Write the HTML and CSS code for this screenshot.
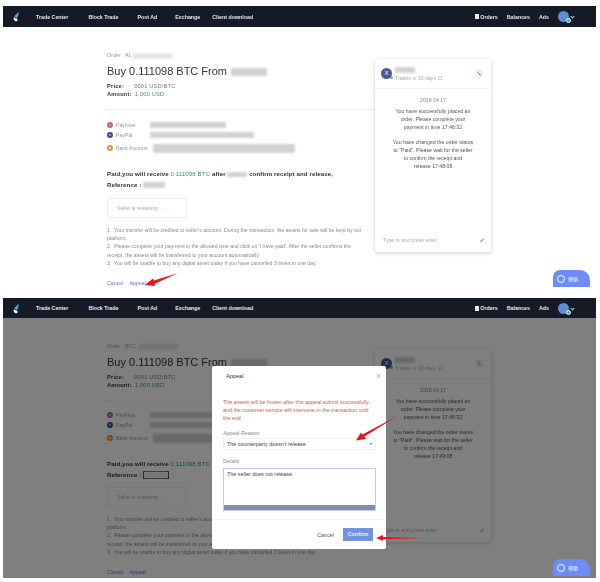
FILE: index.html
```html
<!DOCTYPE html>
<html lang="en">
<head>
    <meta charset="UTF-8">
    <meta name="viewport" content="width=device-width, initial-scale=1.0">
    <title>Appeal an order</title>
    <link rel="stylesheet" href="styles.css">
</head>
<body>
    <!-- first shot: order page -->
    <section class="shot shot-first">
        <nav class="topbar">
            <svg class="logo" viewBox="0 0 10 14"><path d="M6.500 0C7 3 3 4 1.500 7L5 9C7 6 7.500 3 6.500 0Z" fill="#5aa5e8"/><path d="M1 8C0 11 2 13.500 4.500 13C6 12.500 6 10.500 5 10Z" fill="#fff"/></svg>
            <a class="nav-link nav-trade">Trade Center</a>
            <a class="nav-link nav-block">Block Trade</a>
            <a class="nav-link nav-post">Post Ad</a>
            <a class="nav-link nav-exchange">Exchange</a>
            <a class="nav-link">Client download</a>
            <div class="nav-right">
                <span class="orders-icon"></span>
                <a class="nav-link nav-orders">Orders</a>
                <a class="nav-link nav-balances">Balances</a>
                <a class="nav-link">Ads</a>
                <span class="nav-avatar"><span class="nav-badge"></span></span>
                <span class="nav-caret"></span>
            </div>
        </nav>
        <main class="content">
            <div class="order">
                <p class="order-no">Order : #1<span class="redact redact-no"></span></p>
                <h1 class="order-title">Buy 0.111098 BTC From <span class="redact redact-name"></span></h1>
                <p class="order-meta"><b>Price:</b><span class="meta-value">9001 USD/BTC</span></p>
                <p class="order-meta"><b>Amount:</b><span class="meta-green">1,000 USD</span></p>
                <hr class="divider">
                <div class="pay-row"><span class="pay-dot dot-pink"></span><span class="pay-label">PayNow</span><span class="redact redact-pay1"></span></div>
                <div class="pay-row"><span class="pay-dot dot-navy"></span><span class="pay-label">PayPal</span><span class="redact redact-pay2"></span></div>
                <div class="pay-row pay-bank"><span class="pay-dot dot-orange"></span><span class="pay-label label-bank">Bank Account</span><span class="redact redact-pay3"></span></div>
                <p class="paid">Paid,you will receive <span class="paid-green">0.111098 BTC</span> after <span class="redact redact-seller"></span> confirm receipt and release,</p>
                <p class="paid">Reference : <span class="redact redact-ref"></span></p>
                <div class="status-box">Seller is releasing<span class="status-dots">&middot; &middot; &middot;</span></div>
                <ol class="notes">
                    <li>1.&nbsp; Your transfer will be credited to seller's account. During the transaction, the assets for sale will be kept by our platform.</li>
                    <li>2.&nbsp; Please complete your payment in the allowed time and click on 'I have paid'. After the seller confirms the receipt, the assets will be transferred to your account automatically.</li>
                    <li>3.&nbsp; You will be unable to buy any digital asset today if you have cancelled 3 times in one day.</li>
                </ol>
                <div class="order-links"><a>Cancel</a><a>Appeal</a></div>
            </div>
            <aside class="chat-card">
                <header class="chat-head">
                    <span class="chat-avatar">X<span class="chat-online"></span></span>
                    <div class="chat-who"><span class="redact redact-who"></span><span class="chat-trades">Trades in 30 days 11</span></div>
                    <svg class="chat-phone" viewBox="0 0 12 12"><circle cx="6" cy="6" r="5.500" fill="#eef0fa"/><path d="M4 3.500C4 6 6 8.300 8.500 8.300" fill="none" stroke="#6c78c4" stroke-width="1.100"/></svg>
                </header>
                <div class="chat-log">
                    <p class="chat-date">2018 04 17</p>
                    <p class="chat-msg">You have successfully placed an order. Please complete your<br>payment in time 17:46:32</p>
                    <p class="chat-msg">You have changed the order status to "Paid". Please wait for the seller<br>to confirm the receipt and<br>release 17:48:08</p>
                </div>
                <footer class="chat-foot">
                    <span>Type in and press enter</span>
                    <svg class="chat-clip" viewBox="0 0 8 8"><path d="M1 6L5.500 1.500L7 3L2.500 7.200Z" fill="#aaa"/></svg>
                </footer>
            </aside>
        </main>
        <div class="help-btn"><span class="help-ring"></span><span class="help-text">帮助</span></div>
        <svg class="marks" viewBox="0 0 593 281"><polygon points="175,267 151,274.500 150,272.500 142,279 152,280 151.500,278" fill="#e8141c"/></svg>
    </section>

    <!-- second shot: same page with appeal dialog -->
    <section class="shot shot-dim">
        <nav class="topbar">
            <svg class="logo" viewBox="0 0 10 14"><path d="M6.500 0C7 3 3 4 1.500 7L5 9C7 6 7.500 3 6.500 0Z" fill="#5aa5e8"/><path d="M1 8C0 11 2 13.500 4.500 13C6 12.500 6 10.500 5 10Z" fill="#fff"/></svg>
            <a class="nav-link nav-trade">Trade Center</a>
            <a class="nav-link nav-block">Block Trade</a>
            <a class="nav-link nav-post">Post Ad</a>
            <a class="nav-link nav-exchange">Exchange</a>
            <a class="nav-link">Client download</a>
            <div class="nav-right">
                <span class="orders-icon"></span>
                <a class="nav-link nav-orders">Orders</a>
                <a class="nav-link nav-balances">Balances</a>
                <a class="nav-link">Ads</a>
                <span class="nav-avatar"><span class="nav-badge"></span></span>
                <span class="nav-caret"></span>
            </div>
        </nav>
        <main class="content">
            <div class="order">
                <p class="order-no">Order : BTC<span class="redact redact-no"></span></p>
                <h1 class="order-title">Buy 0.111098 BTC From <span class="redact redact-name"></span></h1>
                <p class="order-meta"><b>Price:</b><span class="meta-value">9001 USD/BTC</span></p>
                <p class="order-meta"><b>Amount:</b><span class="meta-green">1,000 USD</span></p>
                <hr class="divider">
                <div class="pay-row"><span class="pay-dot dot-pink"></span><span class="pay-label">PayNow</span><span class="redact redact-pay1"></span></div>
                <div class="pay-row"><span class="pay-dot dot-navy"></span><span class="pay-label">PayPal</span><span class="redact redact-pay2"></span></div>
                <div class="pay-row pay-bank"><span class="pay-dot dot-orange"></span><span class="pay-label label-bank">Bank Account</span><span class="redact redact-pay3"></span></div>
                <p class="paid">Paid,you will receive <span class="paid-green">0.111098 BTC</span> after <span class="redact redact-seller"></span> confirm receipt and release,</p>
                <p class="paid">Reference : <span class="ref-box"><span class="redact redact-ref"></span></span></p>
                <div class="status-box">Seller is releasing<span class="status-dots">&middot; &middot; &middot;</span></div>
                <ol class="notes">
                    <li>1.&nbsp; Your transfer will be credited to seller's account. During the transaction, the assets for sale will be kept by our platform.</li>
                    <li>2.&nbsp; Please complete your payment in the allowed time and click on 'I have paid'. After the seller confirms the receipt, the assets will be transferred to your account automatically.</li>
                    <li>3.&nbsp; You will be unable to buy any digital asset today if you have cancelled 3 times in one day.</li>
                </ol>
                <div class="order-links"><a>Cancel</a><a>Appeal</a></div>
            </div>
            <aside class="chat-card">
                <header class="chat-head">
                    <span class="chat-avatar">X<span class="chat-online"></span></span>
                    <div class="chat-who"><span class="redact redact-who"></span><span class="chat-trades">Trades in 30 days 11</span></div>
                    <svg class="chat-phone" viewBox="0 0 12 12"><circle cx="6" cy="6" r="5.500" fill="#eef0fa"/><path d="M4 3.500C4 6 6 8.300 8.500 8.300" fill="none" stroke="#6c78c4" stroke-width="1.100"/></svg>
                </header>
                <div class="chat-log">
                    <p class="chat-date">2018 04 17</p>
                    <p class="chat-msg">You have successfully placed an order. Please complete your<br>payment in time 17:46:32</p>
                    <p class="chat-msg">You have changed the order status to "Paid". Please wait for the seller<br>to confirm the receipt and<br>release 17:49:08</p>
                </div>
                <footer class="chat-foot">
                    <span>Type in and press enter</span>
                    <svg class="chat-clip" viewBox="0 0 8 8"><path d="M1 6L5.500 1.500L7 3L2.500 7.200Z" fill="#aaa"/></svg>
                </footer>
            </aside>
        </main>
        <div class="backdrop"></div>
        <div class="modal">
            <div class="modal-head"><span>Appeal</span><span class="modal-close">&times;</span></div>
            <div class="modal-body">
                <p class="modal-warn">The assets will be frozen after this appeal submit successfully, and the customer service will intervene in the transaction until the end</p>
                <label class="field-label">Appeal Reason</label>
                <div class="select-box"><span>The counterparty doesn't release</span><span class="select-caret"></span></div>
                <label class="field-label field-details">Details</label>
                <div class="text-box"><span class="text-value">The seller does not release.</span><span class="text-bar"></span></div>
            </div>
            <div class="modal-foot"><a class="modal-cancel">Cancel</a><a class="modal-confirm">Confirm</a></div>
        </div>
        <div class="help-btn"><span class="help-ring"></span><span class="help-text">帮助</span></div>
        <svg class="marks" viewBox="0 0 593 280">
            <polygon points="396,117 361.500,138.500 363,141 353,142.500 358,134.500 359.500,136.500" fill="#e8141c"/>
            <polygon points="421,240 380,239 380,237 373,240 380,243 380,241.200" fill="#e8141c"/>
        </svg>
    </section>
</body>
</html>
```

FILE: styles.css
```css
* {
    box-sizing: border-box;
}

body {
    margin: 0;
    background: #fff;
    font-family: "Liberation Sans", Arial, sans-serif;
    color: #555;
}

p, h1, ol {
    margin: 0;
    padding: 0;
}

.shot {
    position: relative;
    width: 593px;
    height: 281px;
    margin: 6px 0 0 3px;
    overflow: hidden;
    filter: blur(0.4px);
}

.shot-dim {
    height: 280px;
    margin-top: 11px;
}

/* nav */
.topbar {
    position: relative;
    z-index: 3;
    display: flex;
    align-items: center;
    height: 21px;
    padding-left: 10px;
    background: #161a27;
}

.shot-dim .topbar {
    height: 20px;
}

.logo {
    width: 8px;
    height: 11px;
    margin-right: 15px;
}

.nav-link {
    font-size: 5.3px;
    font-weight: bold;
    color: #e6e8ee;
    white-space: nowrap;
}

.nav-trade { margin-right: 20px; }
.nav-block { margin-right: 19px; }
.nav-post { margin-right: 18px; }
.nav-exchange { margin-right: 12px; }

.nav-right {
    display: flex;
    align-items: center;
    margin-left: auto;
    padding-right: 22px;
}

.orders-icon {
    width: 4px;
    height: 5px;
    margin-right: 1px;
    background: #eee;
}

.nav-orders { margin-right: 9px; }
.nav-balances { margin-right: 9px; }

.nav-avatar {
    position: relative;
    width: 11px;
    height: 11px;
    margin-left: 9px;
    border-radius: 50%;
    background: #5c8fd6;
}

.nav-badge {
    position: absolute;
    right: -2px;
    bottom: -1px;
    width: 5px;
    height: 5px;
    border-radius: 50%;
    background: #3fb37a;
    border: 1px solid #dff;
}

.nav-caret {
    width: 3px;
    height: 3px;
    margin-left: 2px;
    border-right: 1px solid #ccc;
    border-bottom: 1px solid #ccc;
    transform: rotate(45deg);
}

/* order column */
.content {
    display: flex;
    align-items: flex-start;
    padding-left: 104px;
}

.order {
    width: 268px;
    padding-top: 24px;
}

.order-no {
    font-size: 5.4px;
    line-height: 8px;
    color: #999;
}

.order-title {
    margin-top: 5px;
    font-size: 11px;
    font-weight: normal;
    line-height: 14px;
    color: #333;
    white-space: nowrap;
}

.order-meta {
    font-size: 5.6px;
    line-height: 8px;
    letter-spacing: 0.25px;
    color: #333;
}

.order-title + .order-meta {
    margin-top: 4px;
}

.meta-value {
    margin-left: 10px;
    color: #777;
}

.meta-green {
    margin-left: 3px;
    color: #2f9a63;
}

.divider {
    height: 1px;
    margin: 11px 0 10px -2px;
    border: 0;
    background: #f0f0f0;
}

.pay-row {
    display: flex;
    align-items: center;
    height: 10px;
    font-size: 5.2px;
    color: #999;
}

.pay-bank {
    height: 10px;
    margin-top: 3px;
}

.pay-dot {
    width: 6px;
    height: 6px;
    margin-right: 3px;
    border-radius: 50%;
    border: 2px solid;
}

.dot-pink { border-color: #c0608f; background: #e3a9c6; }
.dot-navy { border-color: #3f4a92; background: #a9aed8; }
.dot-orange { border-color: #ea8a3a; background: #fff; }

.pay-label {
    width: 34px;
    white-space: nowrap;
}

.label-bank {
    width: 37px;
}

.redact {
    display: inline-block;
    background: #d2d2d2;
    filter: blur(1.2px);
    vertical-align: middle;
}

.redact-no { width: 40px; height: 6px; margin-left: 2px; background: #e6e6e6; }
.redact-name { width: 36px; height: 8px; margin-left: 1px; }
.redact-pay1 { width: 76px; height: 6px; }
.redact-pay2 { width: 104px; height: 6px; }
.redact-pay3 { width: 142px; height: 9px; }
.redact-seller { width: 20px; height: 5px; }
.redact-ref { width: 22px; height: 6px; }
.redact-who { width: 20px; height: 6px; }

.paid {
    font-size: 6.1px;
    font-weight: bold;
    line-height: 11px;
    letter-spacing: 0.1px;
    color: #333;
    white-space: nowrap;
}

.pay-bank + .paid {
    margin-top: 15px;
}

.paid-green {
    font-weight: normal;
    color: #2f9a63;
}

.ref-box {
    display: inline-block;
    padding: 0 1px;
    border: 1px solid #444;
    line-height: 6px;
}

.ref-box .redact {
    background: #eee;
}

.status-box {
    display: flex;
    align-items: center;
    width: 80px;
    height: 20px;
    margin-top: 8px;
    padding-left: 9px;
    border: 1px solid #eee;
    font-size: 5.2px;
    color: #aaa;
}

.status-dots {
    margin-left: 5px;
}

.notes {
    width: 260px;
    margin-top: 8px;
    list-style: none;
    font-size: 5.15px;
    line-height: 8.2px;
    color: #888;
}

.order-links {
    display: flex;
    gap: 6px;
    margin-top: 12px;
    font-size: 5.3px;
    line-height: 8px;
    color: #5b7bc8;
}

.shot-dim .divider {
    margin-bottom: 9px;
}

.shot-dim .status-box {
    margin-top: 7px;
}

/* chat card */
.chat-card {
    width: 116px;
    height: 193px;
    margin: 32px 0 0;
    display: flex;
    flex-direction: column;
    background: #fff;
    border-radius: 2px;
    box-shadow: 0 1px 4px rgba(0, 0, 0, 0.2);
    font-size: 5.2px;
    color: #777;
}

.shot-dim .chat-card {
    margin-top: 31px;
}

.chat-head {
    display: flex;
    align-items: center;
    height: 30px;
    padding: 0 7px 0 6px;
    border-bottom: 1px solid #f2f2f2;
}

.chat-avatar {
    position: relative;
    width: 11px;
    height: 11px;
    border-radius: 50%;
    background: #4d5797;
    color: #fff;
    font-size: 6px;
    line-height: 11px;
    text-align: center;
}

.chat-online {
    position: absolute;
    right: -1px;
    bottom: 0;
    width: 3px;
    height: 3px;
    border-radius: 50%;
    background: #4fc26f;
}

.chat-who {
    display: flex;
    flex-direction: column;
    gap: 2px;
    margin-left: 3px;
}

.chat-trades {
    color: #aaa;
    white-space: nowrap;
}

.chat-phone {
    width: 9px;
    height: 9px;
    margin-left: auto;
}

.chat-log {
    flex: 1;
    padding: 7px 15px 0;
    text-align: center;
    line-height: 8px;
}

.chat-date {
    margin-bottom: 3px;
    color: #888;
}

.chat-msg {
    margin-bottom: 7px;
    color: #555;
}

.chat-foot {
    display: flex;
    align-items: center;
    justify-content: space-between;
    height: 24px;
    padding: 0 6px 0 8px;
    color: #aaa;
}

.chat-clip {
    width: 6px;
    height: 6px;
}

/* help button */
.help-btn {
    position: absolute;
    z-index: 3;
    right: 6px;
    bottom: 0;
    display: flex;
    align-items: center;
    width: 37px;
    height: 17px;
    padding-left: 4px;
    border-radius: 7px 10px 0 0;
    background: #6d8cf5;
}

.shot-dim .help-btn {
    bottom: 2px;
}

.help-ring {
    width: 8px;
    height: 8px;
    border: 1px solid #fff;
    border-radius: 50%;
}

.help-text {
    margin-left: 3px;
    font-family: "Noto Sans CJK SC", sans-serif;
    font-size: 5px;
    color: #fff;
}

/* dialog */
.backdrop {
    position: absolute;
    z-index: 2;
    inset: 0;
    background: rgba(0, 0, 0, 0.5);
}

.modal {
    position: absolute;
    z-index: 4;
    left: 209px;
    top: 68px;
    width: 174px;
    height: 183px;
    display: flex;
    flex-direction: column;
    background: #fff;
    border-radius: 2px;
}

.modal-head {
    display: flex;
    justify-content: space-between;
    height: 20px;
    padding: 7px 5px 0 14px;
    font-size: 5.6px;
    color: #333;
}

.modal-close {
    font-size: 9px;
    line-height: 6px;
    color: #bbb;
}

.modal-body {
    flex: 1;
    padding: 12px 10px 0 11px;
}

.modal-warn {
    font-size: 5.35px;
    line-height: 8px;
    color: #d9534f;
}

.field-label {
    display: block;
    margin-top: 7px;
    font-size: 5.3px;
    line-height: 8px;
    color: #888;
}

.select-box {
    display: flex;
    align-items: center;
    justify-content: space-between;
    height: 12px;
    margin-top: 1px;
    padding: 0 3px;
    border: 1px solid #f0f0f0;
    font-size: 5.4px;
    color: #444;
}

.select-caret {
    border-left: 1.5px solid transparent;
    border-right: 1.5px solid transparent;
    border-top: 2px solid #555;
}

.text-box {
    display: flex;
    flex-direction: column;
    justify-content: space-between;
    height: 43px;
    margin-top: 3px;
    border: 1px solid #bcd0ee;
    font-size: 5.4px;
    color: #444;
}

.text-value {
    padding: 2px 3px;
}

.text-bar {
    height: 5px;
    background: #7f8fa8;
}

.modal-foot {
    display: flex;
    align-items: center;
    justify-content: flex-end;
    gap: 9px;
    height: 30px;
    padding: 0 13px 0 0;
    border-top: 1px solid #f2f2f2;
    font-size: 5.4px;
    color: #555;
}

.modal-confirm {
    width: 30px;
    height: 13px;
    background: #6f93de;
    color: #eef;
    font-weight: bold;
    line-height: 13px;
    text-align: center;
}

/* red arrows drawn on the screenshot */
.marks {
    position: absolute;
    z-index: 5;
    inset: 0;
    width: 100%;
    height: 100%;
}
```
